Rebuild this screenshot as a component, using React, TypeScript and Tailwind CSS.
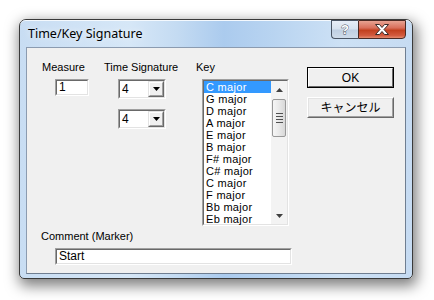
import React from "react";

const keys = [
  "C major",
  "G major",
  "D major",
  "A major",
  "E major",
  "B major",
  "F# major",
  "C# major",
  "C major",
  "F major",
  "Bb major",
  "Eb major",
];

function Sunken({ className, children }: { className: string; children?: React.ReactNode }) {
  return (
    <div className={`border border-t-[#a0a0a0] border-l-[#a0a0a0] border-b-white border-r-white ${className}`}>
      <div className="w-full h-full border border-t-[#696969] border-l-[#696969] border-b-[#e3e3e3] border-r-[#e3e3e3] bg-white flex">
        {children}
      </div>
    </div>
  );
}

function DownTri({ className }: { className?: string }) {
  return (
    <svg width="7" height="4" viewBox="0 0 7 4" className={className}>
      <path d="M0 0H7L3.5 4Z" fill="#000" />
    </svg>
  );
}

function Select() {
  return (
    <Sunken className="w-[48px] h-[20px]">
      <div className="flex-1 pl-[2px] text-[12px] leading-[16px] text-black">4</div>
      <div className="w-[16px] h-[16px] border border-t-[#e3e3e3] border-l-[#e3e3e3] border-b-[#696969] border-r-[#696969] bg-[#f0f0f0]">
        <div className="w-full h-full border border-t-white border-l-white border-b-[#a0a0a0] border-r-[#a0a0a0] flex items-center justify-center">
          <DownTri />
        </div>
      </div>
    </Sunken>
  );
}

function Button({ label, isDefault }: { label: string; isDefault?: boolean }) {
  return (
    <div className={`w-[87px] h-[21px] border ${isDefault ? "border-[#000]" : "border-t-white border-l-white border-b-[#696969] border-r-[#696969]"}`}>
      <div
        className={`w-full h-full border ${
          isDefault
            ? "border-t-white border-l-white border-b-[#696969] border-r-[#696969]"
            : "border-t-[#e3e3e3] border-l-[#e3e3e3] border-b-[#a0a0a0] border-r-[#a0a0a0]"
        } bg-[#f0f0f0] flex items-center justify-center text-[12px] text-black font-['Liberation_Sans','Noto_Sans_CJK_JP',sans-serif]`}
      >
        {label}
      </div>
    </div>
  );
}

export default function App() {
  return (
    <div className="w-[434px] h-[300px] bg-white pt-[19px] pl-[19px] font-['Liberation_Sans',sans-serif] overflow-hidden">
      <div className="w-[394px] h-[260px] rounded-t-[7px] rounded-b-[5px] border border-[#3a3a3a] shadow-[2px_5px_14px_2px_rgba(0,0,0,0.5)] bg-[linear-gradient(90deg,#c8ddf3_0%,#d6e7f7_28%,#c4dbf2_40%,#abcbee_52%,#bad5f1_66%,#cde1f5_82%,#c6dbf2_100%)] flex flex-col">
        {/* Title bar */}
        <div className="h-[27px] flex items-start justify-between rounded-t-[6px] border-t border-t-[#f4f9fe]">
          <div className="pl-[8px] pt-[4px] text-[12.5px] leading-[17px] text-black font-['Noto_Sans',sans-serif] [text-shadow:0_0_6px_rgba(255,255,255,0.9)]">
            Time/Key Signature
          </div>
          <div className="flex mr-[6px] -mt-px">
            <div className="w-[27px] h-[19px] border border-[#4a5564] border-r-0 rounded-bl-[4px] bg-[linear-gradient(180deg,#e7eef7_0%,#d6e2ef_48%,#bfcfe2_52%,#cfdcea_100%)] flex items-center justify-center">
              <span className="text-[13px] leading-[13px] font-bold text-white font-['Liberation_Sans',sans-serif] [-webkit-text-stroke:0.8px_#3a4350] [paint-order:stroke_fill]">?</span>
            </div>
            <div className="w-[48px] h-[19px] border border-[#4a2a24] rounded-br-[4px] bg-[linear-gradient(180deg,#e8a392_0%,#d9705c_40%,#c2401f_55%,#d25a3e_85%,#e48b6f_100%)] flex items-center justify-center">
              <svg width="16" height="11" viewBox="0 0 16 11">
                <path
                  d="M1.5 0.5H5.5L8 3.5L10.5 0.5H14.5L10 5.5L14.5 10.5H10.5L8 7.5L5.5 10.5H1.5L6 5.5Z"
                  fill="#ffffff"
                  stroke="#3a2a28"
                  strokeWidth="1"
                  strokeLinejoin="round"
                />
              </svg>
            </div>
          </div>
        </div>
        {/* Client area */}
        <div className="mx-[6px] mb-[4px] flex-1 border border-t-[#8b9bb0] border-l-[#8b9bb0] border-r-[#6f7e91] border-b-[#6f7e91] bg-[#f0f0f0] text-[11px] text-black flex flex-col">
          <div className="flex pt-[13px]">
            <div className="ml-[15px] w-[62px] flex flex-col">
              <div className="h-[13px] leading-[13px]">Measure</div>
              <Sunken className="mt-[5px] ml-[13px] w-[34px] h-[17px]">
                <div className="pl-[2px] text-[12px] leading-[13px]">1</div>
              </Sunken>
            </div>
            <div className="w-[92px] flex flex-col">
              <div className="h-[13px] leading-[13px]">Time Signature</div>
              <div className="mt-[5px] ml-[14px]">
                <Select />
              </div>
              <div className="mt-[10px] ml-[14px]">
                <Select />
              </div>
            </div>
            <div className="w-[111px] flex flex-col">
              <div className="h-[13px] leading-[13px]">Key</div>
              <Sunken className="mt-[5px] ml-[6px] w-[87px] h-[147px]">
                <div className="flex-1 flex flex-col text-[11px] tracking-[0.3px]">
                  {keys.map((k, i) => (
                    <div
                      key={i}
                      className={`h-[12px] leading-[12px] pl-[2px] whitespace-nowrap ${i === 0 ? "bg-[#3399ff] text-white" : "text-black"}`}
                    >
                      {k}
                    </div>
                  ))}
                </div>
                <div className="w-[16px] bg-[#f3f3f3] flex flex-col items-center">
                  <div className="h-[17px] flex items-center justify-center">
                    <svg width="7" height="4" viewBox="0 0 7 4">
                      <path d="M0 4H7L3.5 0Z" fill="#404040" />
                    </svg>
                  </div>
                  <div className="mt-[1px] w-[14px] h-[38px] rounded-[2px] border border-[#989898] bg-[linear-gradient(90deg,#f6f6f6_0%,#e9e9e9_50%,#d8d8d8_100%)] flex flex-col items-center justify-center gap-[2px]">
                    <div className="w-[7px] h-px bg-[#505050]" />
                    <div className="w-[7px] h-px bg-[#505050]" />
                    <div className="w-[7px] h-px bg-[#505050]" />
                    <div className="w-[7px] h-px bg-[#505050]" />
                  </div>
                  <div className="flex-1" />
                  <div className="h-[17px] flex items-center justify-center">
                    <svg width="7" height="4" viewBox="0 0 7 4">
                      <path d="M0 0H7L3.5 4Z" fill="#404040" />
                    </svg>
                  </div>
                </div>
              </Sunken>
            </div>
            <div className="flex flex-col mt-[6px]">
              <Button label="OK" isDefault />
              <div className="mt-[9px]">
                <Button label="キャンセル" />
              </div>
            </div>
          </div>
          <div className="ml-[14px] mt-[4px] h-[13px] leading-[13px]">Comment (Marker)</div>
          <Sunken className="mt-[5px] ml-[28px] w-[237px] h-[17px]">
            <div className="pl-[2px] text-[12px] leading-[13px]">Start</div>
          </Sunken>
        </div>
      </div>
    </div>
  );
}
